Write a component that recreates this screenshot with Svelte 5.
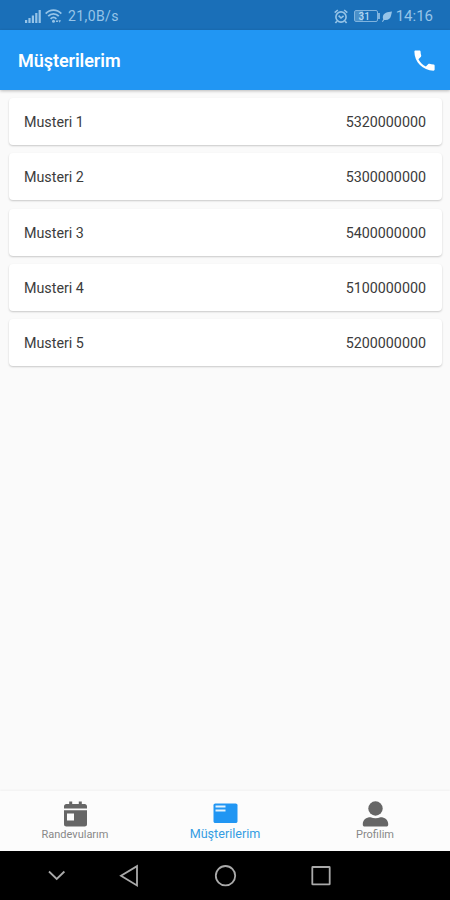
<script lang="ts">
	interface Customer {
		name: string;
		phone: string;
	}

	const customers: Customer[] = [
		{ name: 'Musteri 1', phone: '5320000000' },
		{ name: 'Musteri 2', phone: '5300000000' },
		{ name: 'Musteri 3', phone: '5400000000' },
		{ name: 'Musteri 4', phone: '5100000000' },
		{ name: 'Musteri 5', phone: '5200000000' }
	];

	const tabs = [
		{ key: 'appointments', label: 'Randevularım' },
		{ key: 'customers', label: 'Müşterilerim' },
		{ key: 'profile', label: 'Profilim' }
	];

	let selected = $state('customers');
</script>

<div class="screen">
	<div class="status-bar">
		<svg class="signal" width="16" height="14" viewBox="0 0 16 14">
			<path d="M0 11h2.2v3H0zM3.4 9h2.200v5H3.400zM6.800 6.500H9V14H6.800zM10.200 4h2.200v10h-2.200zM13.600 1h2.200v13h-2.200z" />
		</svg>
		<svg class="wifi" width="17" height="14" viewBox="0 0 17 14">
			<g fill="none" stroke="currentColor" stroke-width="1.8">
				<path d="M.7 4.600C5-.1 12-.1 16.300 4.600M3.200 7.200c3-3.100 7.600-3.100 10.600 0M5.600 9.800c1.700-1.700 4.100-1.700 5.800 0" />
			</g>
			<circle cx="8.500" cy="12.200" r="1.500" />
			<path d="M12 10.500l1.300 2.500h-2.600zM14.700 13.800l-1.300-2.600h2.600z" />
		</svg>
		<span class="speed">21,0B/s</span>
		<svg class="alarm" width="14" height="15" viewBox="0 0 14 15">
			<g fill="none" stroke="currentColor" stroke-width="1.6">
				<circle cx="7" cy="8" r="5.1" />
				<path d="M.7 3.600L3.800 1M13.300 3.600L10.200 1M2.900 12.200l-1.500 1.900M11.100 12.200l1.500 1.900M4.600 6.600L7 9l2.600-2.200" />
			</g>
		</svg>
		<div class="battery"><span class="level">31</span></div>
		<svg class="leaf" width="10" height="11" viewBox="0 0 10 11">
			<path d="M10 .5C5.500 1 1.500 2 .9 5.400c-.2 1.200 0 2.200.4 2.800L0 10.400l.8.5 1.400-2c3.800.8 6.300-1.400 6.800-4.200z" />
		</svg>
		<span class="clock">14:16</span>
	</div>

	<header>
		<h1>Müşterilerim</h1>
		<svg width="27" height="27" viewBox="0 0 24 24">
			<path d="M6.620 10.790c1.440 2.830 3.760 5.140 6.590 6.590l2.200-2.200c.27-.27.67-.36 1.020-.24 1.120.37 2.330.57 3.570.57.55 0 1 .45 1 1V20c0 .55-.45 1-1 1-9.390 0-17-7.610-17-17 0-.55.45-1 1-1h3.500c.55 0 1 .45 1 1 0 1.250.2 2.450.57 3.570.11.35.03.74-.25 1.020l-2.200 2.200z" />
		</svg>
	</header>

	<main>
		{#each customers as customer (customer.name)}
			<div class="card">
				<span>{customer.name}</span>
				<span>{customer.phone}</span>
			</div>
		{/each}
	</main>

	<nav class="tabs">
		{#each tabs as tab (tab.key)}
			<button class:active={tab.key === selected} onclick={() => (selected = tab.key)}>
				<svg width="31" height="30" viewBox="0 0 31 30">
					{#if tab.key === 'appointments'}
						<path d="M4 9.500V7.300C4 6 5 5 6.300 5h2.900V2.600h3V5h6.600V2.600h3V5h2.900C26 5 27 6 27 7.300v2.200z" />
						<path fill-rule="evenodd" d="M4 11.300h23v14c0 1.300-1 2.300-2.300 2.300H6.300C5 27.600 4 26.600 4 25.300zM7 14.500v7h7v-7z" />
					{:else if tab.key === 'customers'}
						<path d="M5.300 4.500h20.400c1 0 1.800.8 1.800 1.800v15.900c0 1-.8 1.800-1.800 1.800H5.300c-1 0-1.800-.8-1.800-1.800V6.300c0-1 .8-1.800 1.800-1.800z" />
						<path class="lines" d="M5.500 6.500H15.500v2H5.500zM5.500 10.500H15.500v2H5.500z" />
					{:else}
						<circle cx="15.500" cy="9.500" r="7.200" />
						<path d="M10.500 18.300c3.200 1.300 6.800 1.300 10 0 4.300 0 7.700 2.700 7.700 6.500v1c0 1-.8 1.800-1.800 1.800H4.600c-1 0-1.800-.8-1.800-1.800v-1c0-3.800 3.400-6.500 7.700-6.500z" />
					{/if}
				</svg>
				<span>{tab.label}</span>
			</button>
		{/each}
	</nav>

	<div class="system-nav">
		<svg width="450" height="49" viewBox="0 0 450 49">
			<path d="M49 20.500l7.700 7.500 7.700-7.500" />
			<path d="M137 15.200v19.300L121 24.800z" />
			<circle cx="225.500" cy="24.700" r="9.700" />
			<rect x="312.300" y="16" width="17.400" height="17.400" rx=".5" />
		</svg>
	</div>
</div>

<style>
	:global(body) {
		margin: 0;
	}

	.screen {
		width: 450px;
		height: 900px;
		display: flex;
		flex-direction: column;
		overflow: hidden;
		background: #fafafa;
		font-family: Roboto, sans-serif;
	}

	svg {
		display: block;
		flex: none;
		fill: currentColor;
	}

	.status-bar {
		height: 30px;
		flex: none;
		display: flex;
		align-items: center;
		box-sizing: border-box;
		padding: 2px 17px 0 25px;
		background: #1a6fb8;
		color: #96c4e8;
		font-size: 14px;
	}

	.wifi {
		margin-left: 4px;
	}

	.speed {
		margin-left: 6px;
		letter-spacing: 0.4px;
	}

	.alarm {
		margin-left: auto;
	}

	.battery {
		position: relative;
		box-sizing: border-box;
		width: 24px;
		height: 12px;
		margin-left: 6px;
		border: 1px solid #7fb3de;
		border-radius: 2px;
		background: linear-gradient(90deg, #4a90c9 35%, transparent 35%);
		color: #b5d8f2;
		font-size: 10px;
		font-weight: 500;
		line-height: 11px;
		text-align: center;
	}

	.level {
		display: block;
		margin-right: 3px;
	}

	.battery::after {
		content: '';
		position: absolute;
		top: 2px;
		right: -3px;
		width: 2px;
		height: 6px;
		background: #7fb3de;
	}

	.leaf {
		margin-left: 4px;
	}

	.clock {
		margin-left: 4px;
		font-size: 15px;
	}

	header {
		height: 60px;
		flex: none;
		display: flex;
		align-items: center;
		justify-content: space-between;
		box-sizing: border-box;
		padding: 0 12px 0 18px;
		background: #2196f3;
		color: #fff;
		box-shadow: 0 1px 3px rgba(0, 0, 0, 0.26);
	}

	h1 {
		margin: 0;
		font-size: 18px;
		font-weight: 600;
		letter-spacing: -0.05px;
	}

	main {
		flex: 1;
		display: flex;
		flex-direction: column;
		gap: 8.3px;
		padding: 8px 8px 0 9px;
	}

	.card {
		height: 47px;
		flex: none;
		display: flex;
		align-items: center;
		justify-content: space-between;
		box-sizing: border-box;
		padding: 1px 16px 0 15px;
		border-radius: 4px;
		background: #fff;
		box-shadow: 0 1px 2px rgba(0, 0, 0, 0.2);
		color: #3c3c3c;
		font-size: 14.3px;
	}

	.tabs {
		height: 60px;
		flex: none;
		display: flex;
		box-sizing: border-box;
		background: #fcfcfc;
		box-shadow: 0 -1px 2px rgba(0, 0, 0, 0.04);
	}

	button {
		flex: 1;
		display: flex;
		flex-direction: column;
		align-items: center;
		padding: 8px 0 0;
		border: none;
		background: none;
		color: #666;
		font-family: inherit;
		font-size: 11px;
		line-height: 12px;
	}

	button span {
		color: #888;
	}

	button.active {
		color: #2196f3;
		font-size: 12.6px;
		line-height: 10px;
	}

	button.active span {
		color: #359de2;
	}

	.lines {
		fill: #e3f2fd;
	}

	.system-nav {
		height: 49px;
		flex: none;
		background: #000;
	}

	.system-nav svg {
		fill: none;
		stroke: #aaa;
		stroke-width: 1.8;
	}
</style>
